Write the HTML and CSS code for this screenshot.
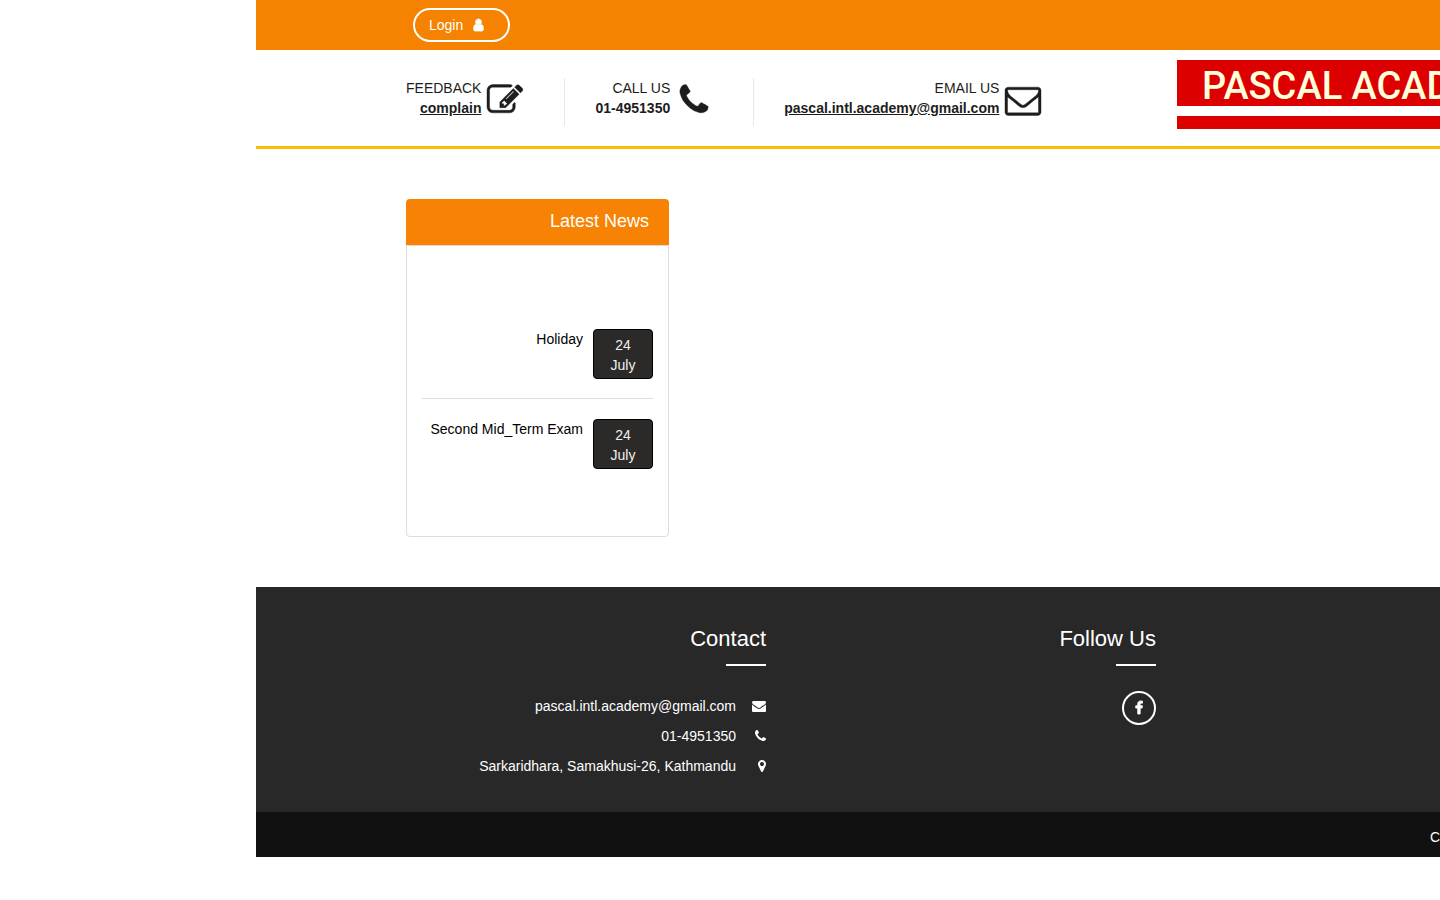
FILE: index.html
```html
<!DOCTYPE html>
<html lang="en">
<head>
<meta charset="utf-8">
<title>Pascal Academy</title>
<meta name="viewport" content="width=device-width, initial-scale=1">
<link rel="stylesheet" href="styles.css">
</head>
<body>
<div class="site">
  <div class="topbar">
    <div class="container">
      <button class="login" type="button">Login
        <svg width="11" height="14" viewBox="256 0 1280 1792" aria-hidden="true"><path stroke="currentColor" stroke-width="100" d="M1536 1399q0 109-62.5 187t-150.5 78h-854q-88 0-150.5-78t-62.5-187q0-85 8.5-160.5t31.5-152 58.5-131 94-89 134.5-34.5q131 128 313 128t313-128q76 0 134.5 34.5t94 89 58.5 131 31.5 152 8.5 160.5zm-256-887q0 159-112.5 271.5t-271.5 112.5-271.5-112.5-112.5-271.5 112.5-271.5 271.5-112.5 271.5 112.5 112.5 271.5z"/></svg>
      </button>
    </div>
  </div>

  <header class="header">
    <div class="container header-row">
      <ul class="info">
        <li class="info-item">
          <div class="info-text"><span>FEEDBACK</span><a href="#">complain</a></div>
          <svg class="info-icon" viewBox="0 0 1792 1792" aria-hidden="true"><path d="M888 1184l116-116-152-152-116 116v56h96v96h56zm440-720q-16-16-33 1l-350 350q-17 17-1 33t33-1l350-350q17-17 1-33zm80 594v190q0 119-84.5 203.5t-203.5 84.5h-832q-119 0-203.5-84.5t-84.5-203.5v-832q0-119 84.5-203.5t203.5-84.5h832q63 0 117 25 15 7 18 23 3 17-9 29l-49 49q-14 14-32 8-23-6-45-6h-832q-66 0-113 47t-47 113v832q0 66 47 113t113 47h832q66 0 113-47t47-113v-126q0-13 9-22l64-64q15-15 35-7t20 29zm-96-738l288 288-672 672h-288v-288zm444 132l-92 92-288-288 92-92q28-28 68-28t68 28l152 152q28 28 28 68t-28 68z"/></svg>
        </li>
        <li class="info-item">
          <div class="info-text"><span>CALL US</span><strong>01-4951350</strong></div>
          <svg class="info-icon" viewBox="0 0 1792 1792" aria-hidden="true"><path d="M1600 1240q0 27-10 70.5t-21 68.5q-21 50-122 106-94 51-186 51-27 0-53-3.5t-57.5-12.5-47-14.5-55.5-20.5-49-18q-98-35-175-83-127-79-264-216t-216-264q-48-77-83-175-3-9-18-49t-20.5-55.5-14.5-47-12.5-57.5-3.5-53q0-92 51-186 56-101 106-122 25-11 68.5-21t70.5-10q14 0 21 3 18 6 53 76 11 19 30 54t35 63.5 31 53.5q3 4 17.5 25t21.5 35.5 7 28.5q0 20-28.5 50t-62 55-62 53-28.5 46q0 9 5 22.5t8.5 20.5 14 24 11.5 19q76 137 174 235t235 174q2 1 19 11.5t24 14 20.5 8.5 22.5 5q18 0 46-28.5t53-62 55-62 50-28.5q14 0 28.5 7t35.5 21.5 25 17.5q25 15 53.5 31t63.5 35 54 30q70 35 76 53 3 7 3 21z"/></svg>
        </li>
        <li class="info-item">
          <div class="info-text"><span>EMAIL US</span><a href="#">pascal.intl.academy@gmail.com</a></div>
          <svg class="info-icon" viewBox="0 0 1792 1792" aria-hidden="true"><path d="M1664 1504v-768q-32 36-69 66-268 206-426 338-51 43-83 67t-86.5 48.5-102.5 24.5h-2q-48 0-102.5-24.5t-86.5-48.5-83-67q-158-132-426-338-37-30-69-66v768q0 13 9.5 22.5t22.5 9.5h1472q13 0 22.5-9.5t9.5-22.5zm0-1051v-24.5l-.5-13-3-12.5-5.5-9-9-7.5-14-2.5h-1472q-13 0-22.5 9.5t-9.5 22.5q0 168 147 284 193 152 401 317 6 5 35 29.5t46 37.5 44.5 31.5 50.5 27.5 43 9h2q20 0 43-9t50.5-27.5 44.5-31.5 46-37.5 35-29.5q208-165 401-317 54-43 100.5-115.5t46.5-131.5zm128-37v1088q0 66-47 113t-113 47h-1472q-66 0-113-47t-47-113v-1088q0-66 47-113t113-47h1472q66 0 113 47t47 113z"/></svg>
        </li>
      </ul>
      <div class="logo">
        <div class="logo-name">PASCAL ACADEMY</div>
        <div class="logo-band"></div>
      </div>
    </div>
  </header>

  <main class="container main">
    <section class="news">
      <h2 class="news-title">Latest News</h2>
      <ul class="news-list">
        <li class="news-item">
          <span>Holiday</span>
          <time class="date"><span>24</span><span>July</span></time>
        </li>
        <li class="news-item">
          <span>Second Mid_Term Exam</span>
          <time class="date"><span>24</span><span>July</span></time>
        </li>
      </ul>
    </section>
  </main>

  <footer class="footer">
    <div class="container footer-grid">
      <section class="footer-col">
        <h2 class="footer-title">Contact</h2>
        <ul class="contact">
          <li>pascal.intl.academy@gmail.com
            <span class="contact-icon"><svg width="14" height="14" viewBox="0 0 1792 1792" aria-hidden="true"><path d="M1792 710v794q0 66-47 113t-113 47h-1472q-66 0-113-47t-47-113v-794q44 49 101 87 362 246 497 345 57 42 92.5 65.5t94.5 48 110 24.5h2q51 0 110-24.5t94.5-48 92.5-65.5q170-123 498-345 57-39 100-87zm0-294q0 79-49 151t-122 123q-376 261-468 325-10 7-42.5 31t-54 38-52 32-57.5 27-50 9h-2q-23 0-50-9t-57.5-27-52-32-54-38-42.5-31q-91-64-262-182.5t-205-142.5q-62-42-117-115.5t-55-136.5q0-78 41.5-130t118.5-52h1472q65 0 112.5 47t47.5 113z"/></svg></span>
          </li>
          <li>01-4951350
            <span class="contact-icon"><svg width="11" height="14" viewBox="192 0 1408 1792" aria-hidden="true"><path d="M1600 1240q0 27-10 70.5t-21 68.5q-21 50-122 106-94 51-186 51-27 0-53-3.5t-57.5-12.5-47-14.5-55.5-20.5-49-18q-98-35-175-83-127-79-264-216t-216-264q-48-77-83-175-3-9-18-49t-20.5-55.5-14.5-47-12.5-57.5-3.5-53q0-92 51-186 56-101 106-122 25-11 68.5-21t70.5-10q14 0 21 3 18 6 53 76 11 19 30 54t35 63.5 31 53.5q3 4 17.5 25t21.5 35.5 7 28.5q0 20-28.5 50t-62 55-62 53-28.5 46q0 9 5 22.5t8.5 20.5 14 24 11.5 19q76 137 174 235t235 174q2 1 19 11.5t24 14 20.5 8.5 22.5 5q18 0 46-28.5t53-62 55-62 50-28.5q14 0 28.5 7t35.5 21.5 25 17.5q25 15 53.5 31t63.5 35 54 30q70 35 76 53 3 7 3 21z"/></svg></span>
          </li>
          <li>Sarkaridhara, Samakhusi-26, Kathmandu
            <span class="contact-icon"><svg width="8" height="14" viewBox="384 0 1024 1792" aria-hidden="true"><path d="M1152 640q0-106-75-181t-181-75-181 75-75 181 75 181 181 75 181-75 75-181zm256 0q0 109-33 179l-364 774q-16 33-47.5 52t-67.5 19-67.5-19-46.5-52l-365-774q-33-70-33-179 0-212 150-362t362-150 362 150 150 362z"/></svg></span>
          </li>
        </ul>
      </section>
      <section class="footer-col">
        <h2 class="footer-title">Follow Us</h2>
        <a class="social" href="#" aria-label="Facebook"><svg width="14" height="14" viewBox="0 0 1792 1792" aria-hidden="true"><path stroke="currentColor" stroke-width="110" d="M1343 12v264h-157q-86 0-116 36t-30 108v189h293l-39 296h-254v759h-306v-759h-255v-296h255v-218q0-186 104-288.5t277-102.5q147 0 228 12z"/></svg></a>
      </section>
    </div>
  </footer>
  <div class="legal">
    <div class="container"><p class="copyright">Copyright</p></div>
  </div>
</div>
</body>
</html>
```
FILE: styles.css
```css
* { box-sizing: border-box; }

body {
  margin: 0;
  overflow-x: hidden;
  background: #fff;
  color: #1d1d1b;
  font: 14px/20px "Liberation Sans", Arial, sans-serif;
}

ul, h2, p { margin: 0; padding: 0; list-style: none; }
h2 { font-weight: 400; }
svg { display: block; fill: currentColor; overflow: visible; }

.site { width: 100%; margin-left: 256px; }
.container { max-width: 1170px; margin: 0 auto; padding: 0 15px; }

.topbar { padding: 8px 0; background: #f58200; }
.login {
  display: flex;
  align-items: center;
  gap: 10px;
  margin-left: 7px;
  padding: 5px 24px 5px 14px;
  border: 2px solid #fff;
  border-radius: 17px;
  background: none;
  color: #fff;
  font: inherit;
}

.header { padding: 10px 0 17px; border-bottom: 3px solid #fbbc05; }
.header-row { display: flex; justify-content: space-between; align-items: flex-start; }

.info { display: flex; padding-top: 18px; }
.info-item {
  display: flex;
  gap: 6px;
  padding: 0 41px 8px 30px;
  border-right: 1px solid #e7e7e7;
}
.info-item:first-child { padding-left: 0; }
.info-item:last-child { padding-right: 0; border-right: 0; }
.info-text { display: flex; flex-direction: column; text-align: right; }
.info-text a { color: inherit; font-weight: 700; }
.info-icon { width: 36px; height: 36px; margin-top: 4px; stroke: currentColor; stroke-width: 20px; }

.logo { width: 369px; color: #ffffdc; }
.logo-name {
  padding: 6px 0 0 25px;
  background: #d00;
  font: 500 38px/40px Roboto, sans-serif;
  white-space: nowrap;
}
.logo-band { height: 13px; margin-top: 10px; background: #d00; }

.main { padding-top: 50px; padding-bottom: 50px; }
.news { width: 263px; border-radius: 4px; }
.news-title {
  padding: 12px 20px 14px;
  border-radius: 4px 4px 0 0;
  background: #f78203;
  color: #fff;
  font-size: 18px;
  line-height: 20px;
  text-align: right;
}
.news-list {
  padding: 64px 15px 47px;
  border: 1px solid #ddd;
  border-radius: 0 0 4px 4px;
  color: #000;
}
.news-item {
  display: flex;
  justify-content: flex-end;
  gap: 10px;
  padding: 19px 0;
}
.news-item + .news-item { padding: 20px 0; border-top: 1px solid #ddd; }
.date {
  display: flex;
  flex-direction: column;
  width: 60px;
  padding: 5px 0 3px;
  border: 1px solid #000;
  border-radius: 4px;
  background: #2b2a29;
  color: #f0f0f0;
  text-align: center;
}

.footer { padding: 37px 0 31px; background: #282828; color: #fff; }
.footer-grid { display: grid; grid-template-columns: repeat(3, 1fr); gap: 30px; }
.footer-col { display: flex; flex-direction: column; align-items: flex-end; }
.footer-title {
  margin-bottom: 25px;
  font-size: 22px;
  line-height: 30px;
}
.footer-title::after {
  content: "";
  display: block;
  width: 40px;
  height: 2px;
  margin: 10px 0 0 auto;
  background: #fff;
}
.contact li { display: flex; justify-content: flex-end; align-items: center; line-height: 30px; }
.contact-icon { display: flex; justify-content: flex-end; width: 30px; }
.social {
  display: grid;
  place-items: center;
  width: 34px;
  height: 34px;
  border: 2px solid #fff;
  border-radius: 50%;
  color: #fff;
}

.legal { padding: 15px 0 10px; background: #111; color: #fff; }
.copyright { width: 116px; margin-left: auto; }
```
